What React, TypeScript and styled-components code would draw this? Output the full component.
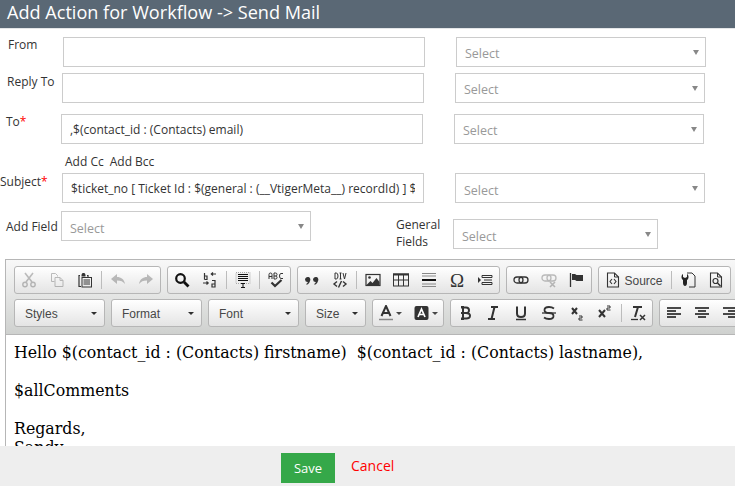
import React from "react";
import styled, { createGlobalStyle } from "styled-components";

const Global = createGlobalStyle`
  html, body { margin: 0; padding: 0; background: #fff; }
  #root { width: 735px; height: 486px; }
  * { box-sizing: border-box; }
`;

const Page = styled.div`
  width: 735px; height: 486px; overflow: hidden;
  display: flex; flex-direction: column;
  font-family: "Open Sans", sans-serif; font-size: 12px; color: #333;
`;
const Header = styled.div`
  flex: none; height: 29px; background: #5a6875; color: #fff;
  border-bottom: 1px solid #e4e6e8;
  font-size: 18.1px; line-height: 24px; padding-left: 7px;
`;
const Form = styled.div`flex: none; padding-top: 8px;`;
const Row = styled.div<{ $ml: number; $mt: number }>`
  display: flex; align-items: flex-start;
  margin-left: ${p => p.$ml}px; margin-top: ${p => p.$mt}px;
`;
const Label = styled.label<{ $w: number; $pt?: number }>`
  flex: none; width: ${p => p.$w}px; line-height: 16px; white-space: nowrap;
  padding-top: ${p => p.$pt ?? 0}px;
  color: #333;
`;
const Req = styled.span`color: #f00;`;
const TextField = styled.input`
  flex: none; width: 362px; height: 30px; border: 1px solid #ccc; background: #fff;
  padding: 0 8px; font: 12px "Open Sans", sans-serif; color: #333; outline: none; border-radius: 0;
`;
const SelectBox = styled.div<{ $w?: number; $ml?: number; $mt?: number; $pt?: number }>`
  flex: none; position: relative; width: ${p => p.$w ?? 250}px; height: 30px;
  margin-left: ${p => p.$ml ?? 0}px; margin-top: ${p => p.$mt ?? 0}px;
  border: 1px solid #ccc; background: #fff; color: #999; font-size: 12.5px;
  padding: ${p => p.$pt ?? 4}px 0 0 8px; line-height: 24px;
  &::after {
    content: ""; position: absolute; right: 6px; top: 12px;
    border-left: 3.5px solid transparent; border-right: 3.5px solid transparent; border-top: 5px solid #888;
  }
`;
const CcRow = styled.div`
  margin: 10px 0 3px 65px; line-height: 16px; height: 16px; display: flex; gap: 6px;
`;
const GeneralLabel = styled.div`
  flex: none; width: 57px; height: 33px; margin: 5px 0 0 85px; line-height: 17px;
`;

const Editor = styled.div`
  flex: 1; min-height: 0; margin: 10px 0 0 5px; overflow: hidden;
  border: 1px solid #b6b6b6; border-right: 0; border-bottom: 0; display: flex; flex-direction: column;
`;
const Toolbar = styled.div`
  flex: none; height: 75px; padding: 6px 0 0 8px;
  background: linear-gradient(#f8f8f8, #cfd1cf); border-bottom: 1px solid #b6b6b6;
  display: flex; flex-direction: column; gap: 5px; overflow: hidden;
`;
const ToolRow = styled.div`display: flex; gap: 6px; height: 28px; flex: none;`;
const Group = styled.div`
  flex: none; display: flex; align-items: center; height: 28px;
  border: 1px solid #b6b6b6; border-radius: 3px;
  background: linear-gradient(#fff, #e4e4e4);
`;
const Btn = styled.div<{ $w?: number; $off?: boolean }>`
  flex: none; width: ${p => p.$w ?? 28}px; height: 26px;
  display: flex; align-items: center; justify-content: center; gap: 3px;
  opacity: ${p => (p.$off ? 0.3 : 1)};
  color: #474747; font: 12px "Liberation Sans", sans-serif;
`;
const Sep = styled.div`flex: none; width: 1px; height: 18px; margin: 0 2px; background: #bcbcbc;`;
const Combo = styled.div<{ $w: number }>`
  flex: none; position: relative; width: ${p => p.$w}px; height: 28px; padding: 1px 0 0 10px;
  border: 1px solid #b6b6b6; border-radius: 3px; background: linear-gradient(#fff, #e4e4e4);
  font: 12px/26px "Liberation Sans", sans-serif; color: #474747;
  &::after {
    content: ""; position: absolute; right: 7px; top: 12px;
    border-left: 3px solid transparent; border-right: 3px solid transparent; border-top: 3px solid #2f2f2f;
  }
`;
const Caret = styled.span`
  flex: none; border-left: 3px solid transparent; border-right: 3px solid transparent; border-top: 3px solid #474747;
`;
const Content = styled.div`
  flex: 1; min-height: 0; overflow: hidden; padding: 8px 0 0 8px; background: #fff; color: #000;
  font: 15.8px/19px "DejaVu Serif", serif; white-space: pre;
`;
const Footer = styled.div`
  flex: none; height: 40px; background: #eee; display: flex; align-items: flex-start;
  padding: 7px 0 0 281px;
`;
const Save = styled.button`
  width: 54px; height: 30px; border: 0; background: #35a849; color: #fff; padding: 0;
  font: 13px "Open Sans", sans-serif;
`;
const Cancel = styled.span`
  margin-left: 16px; color: #f00; font-size: 14px; line-height: 26px;
`;

const Ic: React.FC<{ children: React.ReactNode; w?: number }> = ({ children, w = 16 }) => (
  <svg width={w} height="16" viewBox={`0 0 ${w} 16`} fill="none" stroke="#333" strokeWidth="1" style={{ flex: "none" }}>
    {children}
  </svg>
);

const I = {
  cut: <Ic><path d="M4 1l7 9M12 1L5 10" strokeWidth="1.6" /><circle cx="4" cy="12.5" r="2.2" strokeWidth="1.4" /><circle cx="12" cy="12.5" r="2.2" strokeWidth="1.4" /></Ic>,
  copy: <Ic><path d="M2.500 1.500h4l2 2v1M2.500 1.500v8h3M6 5.500h5l3 3v6H6z" /><path d="M11 5.500v3h3" /></Ic>,
  paste: <Ic><path d="M3 3.500H2v11h2M10 3.500h1v2" strokeWidth="1.200" /><path d="M4.500 3.500c0-2 1-2.500 2-2.500s2 .5 2 2.500v1h-4z" fill="#333" stroke="none" /><rect x="5" y="5.500" width="9.500" height="9.500" /><path d="M6.500 8h6.500M6.500 10h6.500M6.500 12h6.500" /></Ic>,
  undo: <Ic><path d="M1 7l6-5v3c4 0 7 2 8 7-2-2.500-4-3.500-8-3.500V12z" fill="#333" stroke="none" /></Ic>,
  redo: <Ic><path d="M15 7L9 2v3c-4 0-7 2-8 7 2-2.500 4-3.500 8-3.500V12z" fill="#333" stroke="none" /></Ic>,
  find: <Ic><circle cx="6.500" cy="6.500" r="4.300" strokeWidth="2.200" stroke="#111" /><path d="M10 10l4.500 4.500" strokeWidth="2.800" stroke="#111" /></Ic>,
  replace: <Ic><path d="M2.500 1v6.500M2.500 4h2.500v3.500h-2.500M14 2H9.500M11 .5L9.300 2 11 3.500M1 11h5M4.500 9.500L6.200 11 4.500 12.500M10 8.500h3v6.500h-3v-3h3" strokeWidth="1.200" /></Ic>,
  selectAll: <Ic><rect x="1" y="0.500" width="14" height="11" fill="#eee" stroke="#aaa" strokeDasharray="1 1" /><path d="M3 2.500h10M3 4.500h10M3 6.500h10M3 8.500h10" stroke="#111" strokeWidth="1.200" /><path d="M6 11.500h4M8 11.500v4M6 15.500h4" stroke="#111" /></Ic>,
  spell: <Ic><path d="M1 7V2.500Q1 1 2.500 1T4 2.500V7M1 4.500h3M6 1v6h1.500q1.500 0 1.500-1.500T7.500 4H6M7.500 4Q9 4 9 2.500T7.500 1H6M15 1.500h-2Q11.500 1.500 11.500 4t1.500 2.500h2" strokeWidth="1" /><path d="M3.500 10.500l3.500 3.500 6.500-6" strokeWidth="2.200" /></Ic>,
  quote: <Ic><path d="M1 7.500a2.700 2.700 0 1 1 5 1.500c-.4 2-1.500 3-3.300 3.800l-.5-.8c1-.6 1.500-1.200 1.600-2A2.700 2.700 0 0 1 1 7.500zM9 7.500a2.700 2.700 0 1 1 5 1.500c-.4 2-1.500 3-3.300 3.800l-.5-.8c1-.6 1.500-1.200 1.600-2A2.700 2.700 0 0 1 9 7.500z" fill="#333" stroke="none" /></Ic>,
  div: <Ic><path d="M3 1v6h1.200Q6 7 6 4T4.200 1zM8.500 1v6M7.500 1h2M7.500 7h2M11 1l1.500 6L14 1" /><path d="M5 9.500l-3 2.500 3 2.500M11 9.500l3 2.500-3 2.500M9.500 9l-3 6.500" strokeWidth="1.400" /></Ic>,
  image: <Ic><rect x="1" y="2.500" width="14" height="11" strokeWidth="1.200" /><circle cx="4.500" cy="5.500" r="1.300" fill="#333" stroke="none" /><path d="M1.500 13l4-4 2 2 4-5 3 4v3z" fill="#333" stroke="none" /></Ic>,
  table: <Ic><rect x="0.500" y="2" width="15" height="12" /><path d="M0 2.500h16" strokeWidth="2" /><path d="M0 8h16M5.500 3v11M10.500 3v11" /></Ic>,
  hr: <Ic><path d="M1 1.500h14M1 4h14M1 12h14M1 14.500h14" stroke="#888" /><path d="M1 8h14" strokeWidth="2" stroke="#111" /></Ic>,
  iframe: <Ic><path d="M1 5l3 3-3 3z" fill="#333" stroke="none" /><path d="M5 3.500h10v2H5zM5 10.500h10v2H5zM7 8h8" strokeWidth="1" /></Ic>,
  link: <Ic><rect x="1" y="5" width="9" height="6" rx="3" strokeWidth="1.300" /><rect x="6" y="5" width="9" height="6" rx="3" strokeWidth="1.300" /></Ic>,
  unlink: <Ic><rect x="1" y="3" width="9" height="6" rx="3" strokeWidth="1.300" /><rect x="6" y="3" width="9" height="6" rx="3" strokeWidth="1.300" /><path d="M9 10l5 5M14 10l-5 5" strokeWidth="1.600" /></Ic>,
  flag: <Ic><path d="M1.500 1v14" strokeWidth="1.300" /><path d="M3 2h3l1.500 1H13l1 0v6H7.500L6 8H3z" fill="#333" stroke="none" /></Ic>,
  source: <Ic><path d="M2.500 1h7l4 4v10h-11z" strokeWidth="1.100" /><path d="M9.500 1v4h4" /><path d="M7 7L5 9.500 7 12M9 7l2 2.500L9 12" strokeWidth="1.100" /></Ic>,
  template: <Ic><path d="M7 1h5l3 3v11H9" strokeWidth="1" /><path d="M3 2v3l2 1 2-1V2c2 1 2 5 0 6v3c0 2-1 3-2 3s-2-1-2-3V8C1 7 1 3 3 2z" fill="#222" stroke="none" /></Ic>,
  preview: <Ic><path d="M2.500 1h7l4 4v10h-11z" strokeWidth="1.100" /><path d="M9.500 1v4h4" /><circle cx="7.500" cy="9" r="2.500" strokeWidth="1.200" /><path d="M9.500 11l3 3" strokeWidth="1.500" /></Ic>,
  textColor: <Ic w={14}><path d="M2.500 11L7 1l4.500 10M4.300 8h5.400" strokeWidth="2" /><path d="M0 14.500h14" stroke="#888" strokeWidth="1.500" /></Ic>,
  bgColor: <Ic w={15}><rect x="0.500" y="1" width="14" height="14" rx="2" fill="#333" stroke="none" /><path d="M4 12l3.500-8 3.500 8M5.200 9.500h4.600" stroke="#fff" strokeWidth="1.700" /></Ic>,
  sub: <Ic><path d="M3 3l5 6M8 3L3 9" strokeWidth="2" /><path d="M10 11h3v2h-3v2h3.500" strokeWidth="1" /></Ic>,
  sup: <Ic><path d="M2 5l6 7M8 5l-6 7" strokeWidth="2" /><path d="M10 1h3v2h-3v2h3.500" strokeWidth="1" /></Ic>,
  clear: <Ic><path d="M3 2h9M8 2L5 12" strokeWidth="2" /><path d="M1 14.500h7" strokeWidth="1.300" /><path d="M10 10l5 5M15 10l-5 5" strokeWidth="1.500" /></Ic>,
  bold: <Ic><path d="M4 2.500h5q3 0 3 2.800T9 8H4M9 8q4 0 4 2.800T9 13.500H4M4 2h2v12H4" strokeWidth="2" /></Ic>,
  italic: <Ic><path d="M6 2h7M3 14h7M9.500 2L6.500 14" strokeWidth="2" /></Ic>,
  under: <Ic><path d="M4 1.500v7q0 3.500 4 3.500t4-3.500v-7" strokeWidth="2" /><path d="M3 14.500h10" strokeWidth="1.500" /></Ic>,
  strike: <Ic><path d="M13 3.500Q11 2 8 2 3.500 2 3.500 5T8 8t4.500 3T8 14q-3 0-5-1.500" strokeWidth="1.800" /><path d="M1 8h14" strokeWidth="1.300" /></Ic>,
  alignL: <Ic><path d="M1 3h14M1 6h9M1 9h14M1 12h9" strokeWidth="1.400" stroke="#111" /></Ic>,
  alignC: <Ic><path d="M1 3h14M4 6h8M1 9h14M4 12h8" strokeWidth="1.400" stroke="#111" /></Ic>,
  alignR: <Ic><path d="M1 3h14M6 6h9M1 9h14M6 12h9" strokeWidth="1.400" stroke="#111" /></Ic>,
};

const Omega = styled.span`font: 19px/1 "Liberation Serif", serif; color: #333;`;
const SourceText = styled.span`font: 12px "Liberation Sans", sans-serif; color: #474747; padding-top: 1px;`;

const Sel: React.FC<{ $w?: number; $ml?: number; $mt?: number; $pt?: number }> = props => <SelectBox {...props}>Select</SelectBox>;

export default function App() {
  return (
    <Page>
      <Global />
      <Header>Add Action for Workflow -&gt; Send Mail</Header>
      <Form>
        <Row $ml={8} $mt={0}>
          <Label $w={55}>From</Label>
          <TextField readOnly value="" />
          <Sel $ml={31} />
        </Row>
        <Row $ml={7} $mt={6}>
          <Label $w={55} $pt={1}>Reply To</Label>
          <TextField readOnly value="" />
          <Sel $ml={31} />
        </Row>
        <Row $ml={6} $mt={11}>
          <Label $w={55}>To<Req>*</Req></Label>
          <TextField readOnly value=",$(contact_id : (Contacts) email)" />
          <Sel $ml={31} />
        </Row>
        <CcRow><span>Add Cc</span><span>Add Bcc</span></CcRow>
        <Row $ml={0} $mt={0}>
          <Label $w={62} $pt={1}>Subject<Req>*</Req></Label>
          <TextField readOnly value="$ticket_no [ Ticket Id : $(general : (__VtigerMeta__) recordId) ] $" />
          <Sel $ml={31} $pt={5} />
        </Row>
        <Row $ml={6} $mt={8}>
          <Label $w={55} $pt={8}>Add Field</Label>
          <Sel $pt={5} />
          <GeneralLabel>General Fields</GeneralLabel>
          <Sel $w={205} $mt={8} $pt={5} />
        </Row>
      </Form>
      <Editor>
        <Toolbar>
          <ToolRow>
            <Group>
              <Btn $off>{I.cut}</Btn><Btn $off>{I.copy}</Btn><Btn>{I.paste}</Btn><Sep />
              <Btn $off>{I.undo}</Btn><Btn $off>{I.redo}</Btn>
            </Group>
            <Group>
              <Btn>{I.find}</Btn><Btn>{I.replace}</Btn><Sep /><Btn>{I.selectAll}</Btn><Sep /><Btn>{I.spell}</Btn>
            </Group>
            <Group>
              <Btn>{I.quote}</Btn><Btn>{I.div}</Btn><Sep /><Btn>{I.image}</Btn><Btn>{I.table}</Btn><Btn>{I.hr}</Btn>
              <Btn><Omega>Ω</Omega></Btn><Btn>{I.iframe}</Btn>
            </Group>
            <Group>
              <Btn>{I.link}</Btn><Btn $off>{I.unlink}</Btn><Btn>{I.flag}</Btn>
            </Group>
            <Group>
              <Btn $w={70}>{I.source}<SourceText>Source</SourceText></Btn><Sep />
              <Btn>{I.template}</Btn><Btn>{I.preview}</Btn>
            </Group>
          </ToolRow>
          <ToolRow>
            <Combo $w={91}>Styles</Combo>
            <Combo $w={91}>Format</Combo>
            <Combo $w={91}>Font</Combo>
            <Combo $w={61}>Size</Combo>
            <Group>
              <Btn $w={35}>{I.textColor}<Caret /></Btn><Btn $w={35}>{I.bgColor}<Caret /></Btn>
            </Group>
            <Group>
              <Btn>{I.bold}</Btn><Btn>{I.italic}</Btn><Btn>{I.under}</Btn><Btn>{I.strike}</Btn><Btn>{I.sub}</Btn><Btn>{I.sup}</Btn><Sep /><Btn>{I.clear}</Btn>
            </Group>
            <Group>
              <Btn>{I.alignL}</Btn><Btn>{I.alignC}</Btn><Btn>{I.alignR}</Btn>
            </Group>
          </ToolRow>
        </Toolbar>
        <Content>{`Hello $(contact_id : (Contacts) firstname)  $(contact_id : (Contacts) lastname),

$allComments

Regards,
Sandy`}</Content>
      </Editor>
      <Footer>
        <Save>Save</Save>
        <Cancel>Cancel</Cancel>
      </Footer>
    </Page>
  );
}
